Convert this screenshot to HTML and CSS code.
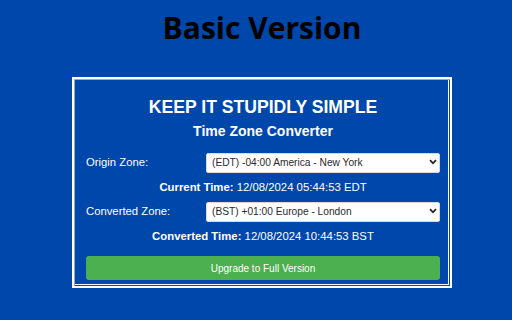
FILE: index.html
```html
<!DOCTYPE html>
<html>
<head>
<meta charset="utf-8">
<link rel="stylesheet" href="styles.css">
</head>
<body>
<h1 class="page-title">Basic Version</h1>
<div class="card">
  <h2 class="card-title">KEEP IT STUPIDLY SIMPLE</h2>
  <h3 class="card-subtitle">Time Zone Converter</h3>
  <div class="row row-first">
    <label class="row-label">Origin Zone:</label>
    <div class="select-wrap">
      <select class="zone-select"><option>(EDT) -04:00 America - New York</option></select>
      <svg class="chevron" width="8" height="6" viewBox="0 0 8 6"><path d="M1 1.2 L4 4.3 L7 1.2" fill="none" stroke="#222" stroke-width="1.8"/></svg>
    </div>
  </div>
  <p class="time-line time-first"><b>Current Time:</b> 12/08/2024 05:44:53 EDT</p>
  <div class="row row-second">
    <label class="row-label">Converted Zone:</label>
    <div class="select-wrap">
      <select class="zone-select"><option>(BST) +01:00 Europe - London</option></select>
      <svg class="chevron" width="8" height="6" viewBox="0 0 8 6"><path d="M1 1.2 L4 4.3 L7 1.2" fill="none" stroke="#222" stroke-width="1.8"/></svg>
    </div>
  </div>
  <p class="time-line time-second"><b>Converted Time:</b> 12/08/2024 10:44:53 BST</p>
  <button class="upgrade-btn">Upgrade to Full Version</button>
</div>
</body>
</html>
```
FILE: styles.css
```css
html, body {
  margin: 0;
  padding: 0;
}
body {
  background: #0047ab;
  padding-left: 12px;
  width: 500px;
  height: 320px;
  overflow: hidden;
  font-family: "Liberation Sans", Arial, sans-serif;
  color: #fff;
}
.page-title {
  margin: 10px 0 0;
  font-family: "Open Sans", sans-serif;
  font-weight: 700;
  font-size: 30px;
  line-height: 36px;
  text-align: center;
  color: #000;
}
.card {
  width: 354px;
  margin: 31px auto 0;
  border: 2px solid #fff;
  box-shadow: inset 1px 1px 0 #9aa8c8, inset -1px -1px 0 #0047ab, inset -2px -2px 0 #fff;
  padding: 18px 10px 6px 12px;
  display: flex;
  flex-direction: column;
}
.card-title {
  margin: 0;
  font-size: 17.6px;
  line-height: 20px;
  font-weight: 700;
  text-align: center;
}
.card-subtitle {
  margin: 6px 0 0;
  font-size: 14px;
  line-height: 16px;
  font-weight: 700;
  text-align: center;
}
.row {
  display: flex;
  align-items: center;
  height: 20px;
}
.row-first { margin-top: 13px; }
.row-second { margin-top: 7px; }
.row-label {
  width: 120px;
  font-size: 11.3px;
  line-height: 14px;
}
.select-wrap {
  position: relative;
  width: 234px;
  height: 20px;
}
.zone-select {
  appearance: none;
  -webkit-appearance: none;
  width: 100%;
  height: 20px;
  margin: 0;
  border: 1px solid #d8d8d8;
  border-radius: 2px;
  background: #fff;
  padding: 0 0 0 5px;
  font-family: "Liberation Sans", Arial, sans-serif;
  font-size: 10.2px;
  color: #2a2a2a;
  outline: none;
}
.chevron {
  position: absolute;
  right: 3px;
  top: 7px;
}
.time-line {
  margin: 0;
  font-size: 11.35px;
  line-height: 14px;
  text-align: center;
}
.time-first { margin-top: 8px; }
.time-second { margin-top: 8px; }
.upgrade-btn {
  margin-top: 13px;
  height: 24px;
  border: none;
  border-radius: 3px;
  background: #4caf50;
  color: #fff;
  font-family: "Liberation Sans", Arial, sans-serif;
  font-size: 10px;
  padding: 0;
}
```
